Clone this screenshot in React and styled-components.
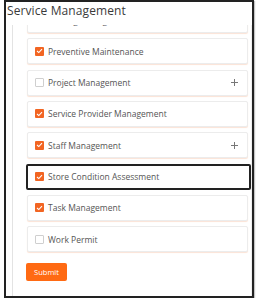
import React from "react";
import styled, { createGlobalStyle, css } from "styled-components";

const Global = createGlobalStyle`
  html, body { margin: 0; padding: 0; background: #fff; }
  body { font-family: "Open Sans", "Liberation Sans", sans-serif; }
  * { box-sizing: border-box; }
`;

const Frame = styled.div`
  margin-left: 4px;
  width: 250px;
  height: 298px;
  border: 2px solid #222;
  box-shadow: 1px 1px 1px #c4c4c4;
  display: flex;
  flex-direction: column;
  background: #fff;
`;

const Title = styled.div`
  height: 22.5px;
  flex: none;
  padding-left: 1px;
  font-size: 12px;
  line-height: 18px;
  color: #3a3a3a;
  letter-spacing: 0.1px;
`;

const Panel = styled.div`
  flex: 1;
  margin-left: 6px;
  border-left: 1px solid #e3e3e3;
  border-right: 1px solid #efefef;
  overflow: hidden;
  padding: 0 3px 0 14px;
`;

const List = styled.div`
  margin-top: -17.5px;
  display: flex;
  flex-direction: column;
  gap: 5.33px;
`;

const Card = styled.div`
  height: 26px;
  display: flex;
  align-items: center;
  padding: 0 9px 0 7px;
  border: 1px solid #ececec;
  border-radius: 2px;
  box-shadow: 0 1px 1px #fbe3d6;
  background: #fff;
  ${(p) =>
    p.$focused &&
    css`
      border: 2px solid #222;
      margin: 0 -3px 0 -1px;
      padding: 0 9px 0 7px;
      box-shadow: none;
    `}
`;

const Box = styled.span`
  width: 9px;
  height: 9px;
  flex: none;
  border-radius: 1px;
  display: flex;
  align-items: center;
  justify-content: center;
  ${(p) =>
    p.$checked
      ? css`
          background: #f26522;
        `
      : css`
          border: 1px solid #cfcfcf;
          background: #fff;
        `}
`;

const Label = styled.span`
  margin-left: 4px;
  font-size: 8.5px;
  color: #555;
  flex: 1;
  white-space: nowrap;
`;

const Plus = styled.span`
  width: 7px;
  height: 7px;
  position: relative;
  flex: none;
  &::before,
  &::after {
    content: "";
    position: absolute;
    background: #777;
  }
  &::before { left: 0; right: 0; top: 3px; height: 1px; }
  &::after { top: 0; bottom: 0; left: 3px; width: 1px; }
`;

const Submit = styled.button`
  margin-top: 11px;
  width: 41px;
  height: 18px;
  border: none;
  border-radius: 2px;
  background: #ff6a13;
  color: #fff;
  font-family: inherit;
  font-size: 7.5px;
  padding: 0;
  margin-left: -1px;
`;

const Check = () => (
  <svg width="7" height="6" viewBox="0 0 7 6">
    <path d="M1 3 L2.8 4.6 L6 1.2" fill="none" stroke="#fff" strokeWidth="1.1" />
  </svg>
);

const items = [
  { label: "Leasing Management", checked: false },
  { label: "Preventive Maintenance", checked: true },
  { label: "Project Management", checked: false, plus: true },
  { label: "Service Provider Management", checked: true },
  { label: "Staff Management", checked: true, plus: true },
  { label: "Store Condition Assessment", checked: true, focused: true },
  { label: "Task Management", checked: true },
  { label: "Work Permit", checked: false },
];

export default function App() {
  return (
    <>
      <Global />
      <Frame>
        <Title>Service Management</Title>
        <Panel>
          <List>
            {items.map((it) => (
              <Card key={it.label} $focused={it.focused}>
                <Box $checked={it.checked}>{it.checked && <Check />}</Box>
                <Label>{it.label}</Label>
                {it.plus && <Plus />}
              </Card>
            ))}
          </List>
          <Submit>Submit</Submit>
        </Panel>
      </Frame>
    </>
  );
}
